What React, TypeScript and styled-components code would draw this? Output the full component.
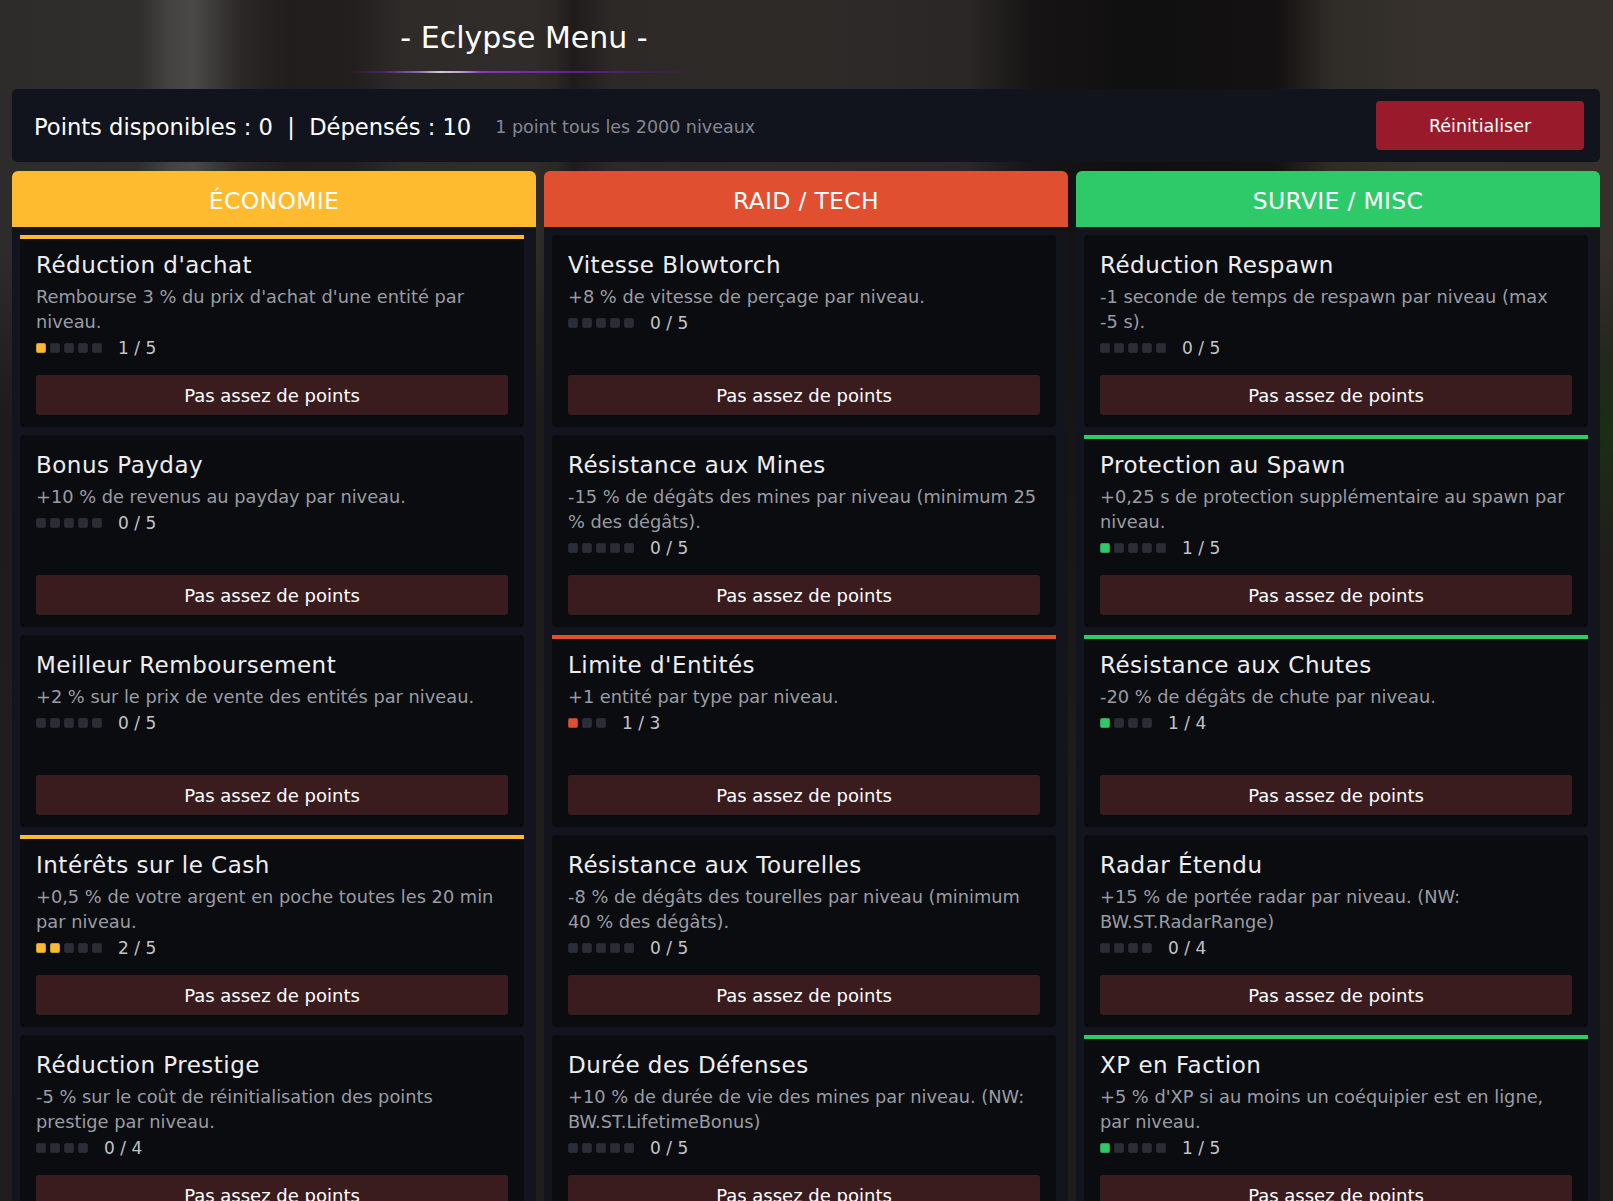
import React from 'react';
import styled, { createGlobalStyle } from 'styled-components';

const GlobalStyle = createGlobalStyle`
  html, body {
    margin: 0;
    padding: 0;
    height: 100%;
    overflow: hidden;
  }
  body {
    font-family: "DejaVu Sans", "Noto Sans", sans-serif;
    color: #ffffff;
    background:
      radial-gradient(ellipse 70px 130px at 100% 430px, rgba(28, 48, 20, 0.95), rgba(28, 48, 20, 0) 100%),
      linear-gradient(180deg, rgba(22, 20, 19, 0) 0px, rgba(22, 20, 19, 0) 250px, rgba(24, 22, 21, 0.75) 420px, rgba(30, 29, 28, 0.92) 760px, rgba(30, 29, 28, 0.95) 1201px),
      linear-gradient(90deg,
        #2e2c2b 0%, #302e2d 8.5%, #444342 10.5%, #4a4948 12%, #3a3837 13.5%, #2a2726 15%,
        #201d1c 18%, #231f1e 22%, #2f2b29 25%, #302c2a 33%, #2a2725 34.5%,
        #1e1b1a 35.5%, #2c2927 38%, #2d2a28 50%, #2a2726 60%, #161414 64%,
        #111010 70%, #131111 79%, #2f2b27 82.5%, #36312c 88%, #35302b 100%);
  }
  #root {
    height: 100%;
  }
`;

const Page = styled.div`
  height: 100vh;
  box-sizing: border-box;
  padding: 0 13px 0 12px;
  display: flex;
  flex-direction: column;
  overflow: hidden;
`;

const TitleArea = styled.header`
  width: 1024px;
  height: 89px;
  flex-shrink: 0;
  display: flex;
  flex-direction: column;
  align-items: center;
`;

const Title = styled.h1`
  margin: 20px 0 0;
  font-size: 30px;
  line-height: 36px;
  font-weight: 400;
  color: #ffffff;
  white-space: nowrap;
`;

const TitleLine = styled.div`
  margin-top: 15px;
  width: 352px;
  height: 2px;
  background: linear-gradient(90deg,
    rgba(70, 20, 110, 0) 0%,
    rgba(90, 30, 140, 0.7) 10%,
    #8c6aa8 20%,
    #d2ccd8 26%,
    #b9a6c9 32%,
    #8a36c4 38%,
    #6f20ad 58%,
    rgba(80, 25, 125, 0.6) 82%,
    rgba(70, 20, 110, 0) 100%);
`;

const TopBar = styled.section`
  height: 73px;
  flex-shrink: 0;
  box-sizing: border-box;
  padding: 0 16px 0 22px;
  background: #11141c;
  border-radius: 5px;
  display: flex;
  align-items: center;
`;

const PointsText = styled.div`
  font-size: 22.6px;
  padding-top: 2px;
  color: #ffffff;
  white-space: nowrap;
`;

const HintText = styled.div`
  margin-left: 24px;
  padding-top: 2px;
  font-size: 17.5px;
  color: #858892;
  white-space: nowrap;
`;

const Spacer = styled.div`
  flex: 1;
`;

const ResetButton = styled.button`
  width: 208px;
  height: 49px;
  border: none;
  border-radius: 4px;
  background: #991a2b;
  color: #ffffff;
  font-family: inherit;
  font-size: 17.5px;
  cursor: pointer;
`;

const Columns = styled.main`
  flex: 1;
  min-height: 0;
  margin-top: 9px;
  display: grid;
  grid-template-columns: repeat(3, 1fr);
  gap: 8px;
`;

const Column = styled.div`
  display: flex;
  flex-direction: column;
  min-height: 0;
  overflow: hidden;
`;

const ColumnHeader = styled.div<{ $color: string }>`
  height: 56px;
  flex-shrink: 0;
  box-sizing: border-box;
  padding-top: 3px;
  background: ${(p) => p.$color};
  border-radius: 6px 6px 0 0;
  display: flex;
  align-items: center;
  justify-content: center;
  font-size: 23.5px;
  letter-spacing: 0.3px;
  color: #ffffff;
`;

const ColumnBody = styled.div`
  flex: 1;
  min-height: 0;
  box-sizing: border-box;
  padding: 8px 12px 8px 8px;
  background: linear-gradient(to left, #141519 4px, #12151d 4px);
  display: flex;
  flex-direction: column;
  gap: 8px;
  overflow: hidden;
`;

const Card = styled.article<{ $accent: string | null }>`
  height: 192px;
  flex-shrink: 0;
  box-sizing: border-box;
  background: #0b0c10;
  border-radius: ${(p) => (p.$accent ? '0 0 4px 4px' : '4px')};
  border-top: ${(p) => (p.$accent ? `4px solid ${p.$accent}` : 'none')};
  padding: ${(p) => (p.$accent ? '12px 16px 12px' : '16px 16px 12px')};
  display: flex;
  flex-direction: column;
`;

const CardTitle = styled.h2`
  margin: 0 0 5px;
  font-size: 23px;
  letter-spacing: 0.5px;
  line-height: 28px;
  font-weight: 400;
  color: #eeeef0;
  white-space: nowrap;
`;

const Description = styled.p`
  margin: 0;
  font-size: 17.8px;
  line-height: 25px;
  color: #9a9ca3;
`;

const DescLine = styled.span`
  display: block;
  white-space: nowrap;
`;

const LevelRow = styled.div`
  margin-top: 2px;
  height: 24px;
  display: flex;
  align-items: center;
  gap: 16px;
`;

const Dots = styled.div`
  display: flex;
  gap: 4px;
`;

const Dot = styled.span<{ $color: string | null }>`
  width: 10px;
  height: 10px;
  box-sizing: border-box;
  border-radius: 2px;
  background: ${(p) => p.$color ?? '#2b2d37'};
  border: 1px solid ${(p) => (p.$color ? 'rgba(0,0,0,0.18)' : '#262831')};
`;

const LevelText = styled.span`
  font-size: 17px;
  color: #c3c4c9;
  white-space: nowrap;
`;

const ActionButton = styled.button`
  margin-top: auto;
  width: 100%;
  height: 40px;
  flex-shrink: 0;
  border: none;
  border-radius: 3px;
  background: #3a1c1f;
  color: #ffffff;
  font-family: inherit;
  font-size: 18px;
  cursor: pointer;
`;

type Perk = {
  title: string;
  desc: string[];
  level: number;
  max: number;
};

type Category = {
  name: string;
  color: string;
  perks: Perk[];
};

const categories: Category[] = [
  {
    name: 'ÉCONOMIE',
    color: '#ffbb30',
    perks: [
      { title: "Réduction d'achat", desc: ["Rembourse 3 % du prix d'achat d'une entité par", 'niveau.'], level: 1, max: 5 },
      { title: 'Bonus Payday', desc: ['+10 % de revenus au payday par niveau.'], level: 0, max: 5 },
      { title: 'Meilleur Remboursement', desc: ['+2 % sur le prix de vente des entités par niveau.'], level: 0, max: 5 },
      { title: 'Intérêts sur le Cash', desc: ['+0,5 % de votre argent en poche toutes les 20 min', 'par niveau.'], level: 2, max: 5 },
      { title: 'Réduction Prestige', desc: ['-5 % sur le coût de réinitialisation des points', 'prestige par niveau.'], level: 0, max: 4 },
    ],
  },
  {
    name: 'RAID / TECH',
    color: '#e05030',
    perks: [
      { title: 'Vitesse Blowtorch', desc: ['+8 % de vitesse de perçage par niveau.'], level: 0, max: 5 },
      { title: 'Résistance aux Mines', desc: ['-15 % de dégâts des mines par niveau (minimum 25', '% des dégâts).'], level: 0, max: 5 },
      { title: "Limite d'Entités", desc: ['+1 entité par type par niveau.'], level: 1, max: 3 },
      { title: 'Résistance aux Tourelles', desc: ['-8 % de dégâts des tourelles par niveau (minimum', '40 % des dégâts).'], level: 0, max: 5 },
      { title: 'Durée des Défenses', desc: ['+10 % de durée de vie des mines par niveau. (NW:', 'BW.ST.LifetimeBonus)'], level: 0, max: 5 },
    ],
  },
  {
    name: 'SURVIE / MISC',
    color: '#2eca6a',
    perks: [
      { title: 'Réduction Respawn', desc: ['-1 seconde de temps de respawn par niveau (max', '-5 s).'], level: 0, max: 5 },
      { title: 'Protection au Spawn', desc: ['+0,25 s de protection supplémentaire au spawn par', 'niveau.'], level: 1, max: 5 },
      { title: 'Résistance aux Chutes', desc: ['-20 % de dégâts de chute par niveau.'], level: 1, max: 4 },
      { title: 'Radar Étendu', desc: ['+15 % de portée radar par niveau. (NW:', 'BW.ST.RadarRange)'], level: 0, max: 4 },
      { title: 'XP en Faction', desc: ["+5 % d'XP si au moins un coéquipier est en ligne,", 'par niveau.'], level: 1, max: 5 },
    ],
  },
];

const PerkCard: React.FC<{ perk: Perk; color: string }> = ({ perk, color }) => (
  <Card $accent={perk.level > 0 ? color : null}>
    <CardTitle>{perk.title}</CardTitle>
    <Description>
      {perk.desc.map((line, i) => (
        <DescLine key={i}>{line}</DescLine>
      ))}
    </Description>
    <LevelRow>
      <Dots>
        {Array.from({ length: perk.max }).map((_, i) => (
          <Dot key={i} $color={i < perk.level ? color : null} />
        ))}
      </Dots>
      <LevelText>
        {perk.level} / {perk.max}
      </LevelText>
    </LevelRow>
    <ActionButton>Pas assez de points</ActionButton>
  </Card>
);

export default function App() {
  return (
    <>
      <GlobalStyle />
      <Page>
        <TitleArea>
          <Title>- Eclypse Menu -</Title>
          <TitleLine />
        </TitleArea>
        <TopBar>
          <PointsText>Points disponibles : 0&nbsp;&nbsp;|&nbsp;&nbsp;Dépensés : 10</PointsText>
          <HintText>1 point tous les 2000 niveaux</HintText>
          <Spacer />
          <ResetButton>Réinitialiser</ResetButton>
        </TopBar>
        <Columns>
          {categories.map((cat) => (
            <Column key={cat.name}>
              <ColumnHeader $color={cat.color}>{cat.name}</ColumnHeader>
              <ColumnBody>
                {cat.perks.map((perk) => (
                  <PerkCard key={perk.title} perk={perk} color={cat.color} />
                ))}
              </ColumnBody>
            </Column>
          ))}
        </Columns>
      </Page>
    </>
  );
}
